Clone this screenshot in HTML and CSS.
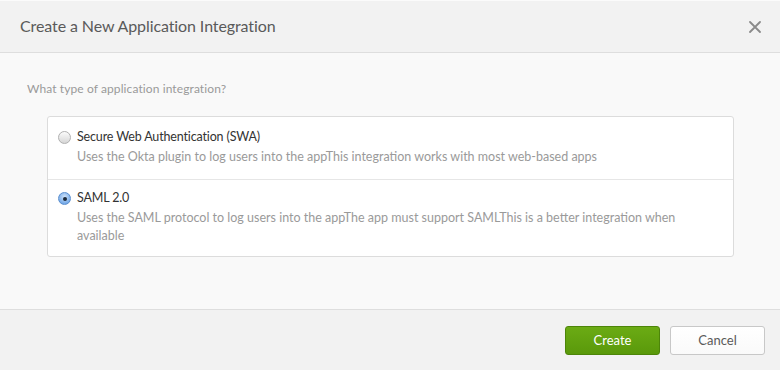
FILE: index.html
```html
<!DOCTYPE html>
<html>
<head>
<meta charset="utf-8">
<link rel="stylesheet" href="styles.css">
</head>
<body>
<div class="dialog">
  <div class="header">
    <h1 class="title">Create a New Application Integration</h1>
    <span class="close">
      <svg width="12" height="12" viewBox="0 0 12 12"><path d="M1 1L11 11M11 1L1 11" stroke="#8a8a8a" stroke-width="1.8" stroke-linecap="round"/></svg>
    </span>
  </div>
  <div class="body">
    <p class="question">What type of application integration?</p>
    <div class="card">
      <div class="option">
        <span class="radio"></span>
        <div class="option-text">
          <div class="label">Secure Web Authentication (SWA)</div>
          <div class="desc">Uses the Okta plugin to log users into the appThis integration works with most web-based apps</div>
        </div>
      </div>
      <div class="option">
        <span class="radio checked"></span>
        <div class="option-text">
          <div class="label">SAML 2.0</div>
          <div class="desc">Uses the SAML protocol to log users into the appThe app must support SAMLThis is a better integration when available</div>
        </div>
      </div>
    </div>
  </div>
  <div class="footer">
    <button class="btn btn-primary">Create</button>
    <button class="btn btn-default">Cancel</button>
  </div>
</div>
</body>
</html>
```
FILE: styles.css
```css
* { box-sizing: border-box; }
html, body { margin: 0; padding: 0; }
body {
  width: 780px;
  height: 370px;
  overflow: hidden;
  font-family: Lato, "Liberation Sans", sans-serif;
  background: #f9f9f9;
}
.dialog {
  width: 780px;
  height: 370px;
  display: flex;
  flex-direction: column;
  border-top: 1px solid #fbfbfb;
}
.header {
  height: 52px;
  flex: none;
  background: #f2f2f2;
  border-bottom: 1px solid #dedede;
  display: flex;
  align-items: center;
  justify-content: space-between;
  padding: 0 19px 0 20px;
}
.title {
  margin: 0 0 2px 0;
  font-size: 16px;
  font-weight: normal;
  color: #5a5a5a;
  letter-spacing: -0.1px;
}
.close { display: flex; margin-top: 0; }
.body {
  flex: 1;
  background: #f9f9f9;
  padding: 28px 46px 0 27px;
}
.question {
  margin: 0 0 19px 0;
  font-size: 12px;
  letter-spacing: 0.1px;
  color: #9a9a9a;
  height: 16px;
  line-height: 16px;
}
.card {
  margin-left: 20px;
  background: #fff;
  border: 1px solid #dcdcdc;
  border-radius: 3px;
}
.option {
  display: flex;
  align-items: flex-start;
  padding: 11px 10px 13px 10px;
}
.option + .option {
  border-top: 1px solid #e6e6e6;
  padding-top: 9px;
  padding-bottom: 11px;
}
.option-text { max-width: 615px; }
.radio {
  flex: none;
  width: 13px;
  height: 13px;
  margin-top: 3px;
  margin-right: 6px;
  border-radius: 50%;
  border: 1px solid #b0b0b0;
  background: linear-gradient(#fbfbfb, #d6d6d6);
  display: flex;
  align-items: center;
  justify-content: center;
}
.radio.checked {
  border-color: #5b8fcf;
  background: radial-gradient(circle at 50% 35%, #cfe3fa, #6ea5e6 80%);
}
.radio.checked::after {
  content: "";
  width: 4px;
  height: 4px;
  border-radius: 50%;
  background: #1d2a3a;
}
.label {
  font-size: 12.5px;
  letter-spacing: -0.15px;
  color: #333;
  line-height: 18px;
}
.desc {
  margin-top: 2px;
  font-size: 12.5px;
  color: #9a9a9a;
  line-height: 18px;
}
.footer {
  height: 61px;
  flex: none;
  background: #f2f2f2;
  border-top: 1px solid #dedede;
  display: flex;
  align-items: center;
  justify-content: flex-end;
  gap: 10px;
  padding: 0 15px 0 0;
}
.btn {
  width: 95px;
  height: 29px;
  font-family: inherit;
  font-size: 13px;
  border-radius: 3px;
  cursor: pointer;
}
.btn-primary {
  color: #fff;
  background: linear-gradient(#6bab14, #5a990b);
  border: 1px solid #4d8509;
}
.btn-default {
  color: #5a5a5a;
  background: linear-gradient(#ffffff, #fafafa);
  border: 1px solid #c8c8c8;
}
```
